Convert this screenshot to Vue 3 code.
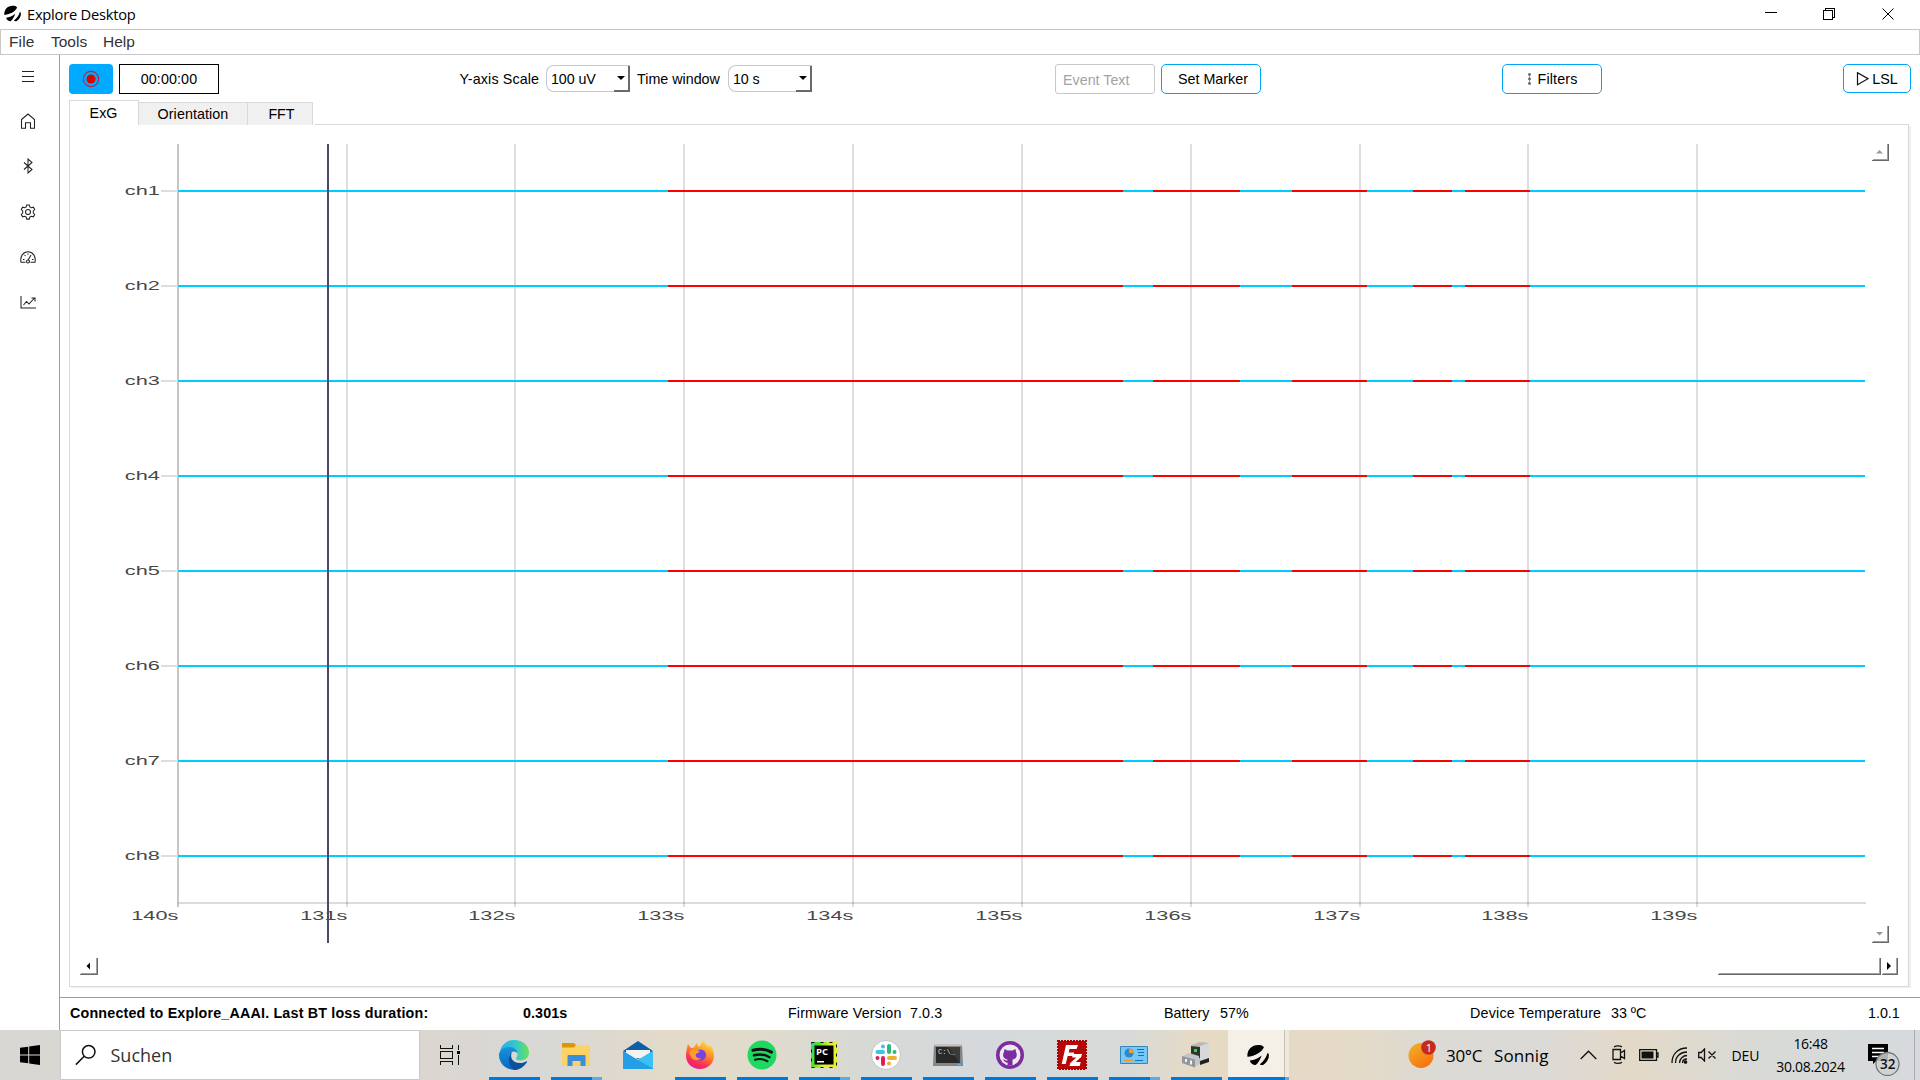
<script setup>
const channels = Array.from({ length: 8 }, (_, i) => ({ name: 'ch' + (i + 1), y: 66 + i * 95 }))
const ticks = [
  { x: 108, label: '140s' },
  { x: 277, label: '131s' },
  { x: 445, label: '132s' },
  { x: 614, label: '133s' },
  { x: 783, label: '134s' },
  { x: 952, label: '135s' },
  { x: 1121, label: '136s' },
  { x: 1290, label: '137s' },
  { x: 1458, label: '138s' },
  { x: 1627, label: '139s' },
]
const losses = [
  [598, 1053],
  [1083, 1170],
  [1222, 1297],
  [1343, 1382],
  [1395, 1460],
]
</script>

<template>
  <div class="screen">
    <header class="titlebar">
      <svg class="logo" width="17" height="17" viewBox="0 0 24 24">
        <path d="M.500 14C-.500 7 5 1 12 1c3 0 5.500.500 6.500 2.500C16 9 9 13 .500 14z" />
        <path d="M3 18c5-.500 9-2 13-5.500-1.500 4-3.500 8-6.500 10.500C6 23 4 21 3 18z" />
        <path d="M14 22c4-3 7-7 8.500-12.500 3 2 1 10-4.500 13-1 .6-3 .6-4-.5z" />
      </svg>
      <span class="app-name">Explore Desktop</span>
      <svg class="win" width="132" height="16" viewBox="0 0 132 16" shape-rendering="crispEdges">
        <path d="M0 6.500h12M58.500 4.500h9v9h-9zM60.500 4.500v-2h9v9h-2" />
        <path d="M117.500 2.500l11 11M128.500 2.500l-11 11" shape-rendering="auto" />
      </svg>
    </header>
    <nav class="menubar"><span class="m1">File</span><span class="m2">Tools</span><span class="m3">Help</span></nav>

    <div class="body">
      <aside class="side">
        <svg width="16" height="16" viewBox="0 0 16 16"><path d="M2 3.500h12M2 8.500h12M2 13.500h12" shape-rendering="crispEdges" /></svg>
        <svg width="16" height="16" viewBox="0 0 16 16"><path d="M1.500 6.500 8 1l6.500 5.500v8.700h-4V9.700h-5v5.500h-4z" /></svg>
        <svg width="16" height="16" viewBox="0 0 16 16"><path d="M4 4.500l8 7-4 3.500V1l4 3.500-8 7" /></svg>
        <svg width="16" height="16" viewBox="0 0 16 16"><circle cx="8" cy="8" r="2.500" /><path d="M6.700.900h2.600l.500 2 1.600.900 2-.600 1.300 2.300-1.400 1.500v2l1.400 1.500-1.300 2.300-2-.600-1.600.900-.500 2H6.700l-.500-2-1.600-.900-2 .600-1.300-2.300L2.700 9V7L1.300 5.500l1.300-2.300 2 .600 1.600-.900z" /></svg>
        <svg width="16" height="16" viewBox="0 0 16 16"><path d="M5.500 13.300H1C-.200 7 3.500 2.700 8 2.700s8.200 4.300 7 10.600h-4.500M8.200 11l2.800-5M3 10.500h1.500M4.500 6l1 1M8 4.500v1.200M12 10.500h1.500" /><circle cx="8" cy="12.500" r="1.500" /></svg>
        <svg width="16" height="16" viewBox="0 0 16 16"><path d="M1 2v12h15M3.500 11l3-3.500 2.500 2.500 5.500-6M11.500 4h3.500v3.500" /></svg>
      </aside>

      <main class="main">
        <div class="toolbar">
          <button class="rec">
            <svg width="18" height="18" viewBox="0 0 18 18"><circle cx="9" cy="9" r="7.600" fill="none" stroke="#c3202f" stroke-width="1.100" /><circle cx="9" cy="9" r="4.500" fill="#dc0000" /></svg>
          </button>
          <div class="timer">00:00:00</div>
          <label class="lab-y">Y-axis Scale</label>
          <div class="combo c1">100 uV<i></i></div>
          <label class="lab-t">Time window</label>
          <div class="combo c2">10 s<i></i></div>
          <div class="event">Event Text</div>
          <button class="btn marker">Set Marker</button>
          <button class="btn filters">
            <svg width="5" height="14" viewBox="0 0 5 14"><path d="M2.500 2v10" stroke="#aaa" /><g fill="#666"><circle cx="2.500" cy="2.500" r="1.400" /><circle cx="2.500" cy="7" r="1.400" /><circle cx="2.500" cy="11.500" r="1.400" /></g></svg>Filters
          </button>
          <button class="btn lsl">
            <svg width="13" height="14" viewBox="0 0 13 14"><path d="M1.500.700v12.100L12 6.700z" fill="none" stroke="#111" stroke-width="1.200" /></svg>LSL
          </button>
        </div>

        <div class="tabs">
          <div class="tab active">ExG</div>
          <div class="tab t2">Orientation</div>
          <div class="tab t3">FFT</div>
          <div class="rule"></div>
        </div>
        <section class="pane">
          <svg class="chart" width="1838" height="861" viewBox="0 0 1838 861">
            <g shape-rendering="crispEdges">
              <template v-for="(t, i) in ticks" :key="t.x">
                <rect :x="t.x - 1" y="19" width="2" height="763" :fill="i ? '#dedede' : '#c6c6c6'" />
              </template>
              <rect x="107" y="777" width="1689" height="2" fill="#dcdcdc" />
              <template v-for="t in ticks" :key="t.label">
                <rect :x="t.x - 1" y="777" width="2" height="2" fill="#bdbdbd" />
              </template>
              <template v-for="c in channels" :key="c.name">
                <rect x="91" :y="c.y - 1" width="17" height="2" fill="#dedede" />
                <rect x="108" :y="c.y - 1" width="1687" height="2" fill="#00ccff" />
                <rect v-for="l in losses" :key="l[0]" :x="l[0]" :y="c.y - 1" :width="l[1] - l[0]" height="2" fill="#ff0000" />
              </template>
            </g>
            <g class="axis">
              <text v-for="c in channels" :key="c.name" x="54.800" :y="c.y + 3.500" textLength="35" lengthAdjust="spacingAndGlyphs">{{ c.name }}</text>
              <text v-for="t in ticks" :key="t.label" :x="t.x - 46.700" :y="795.300" textLength="47" lengthAdjust="spacingAndGlyphs">{{ t.label }}</text>
            </g>
            <rect x="257" y="19" width="2" height="799" fill="#494963" />
            <g shape-rendering="crispEdges" fill="none">
              <g stroke="#a0a0a0">
                <path d="M1803 34.500h14.500V19M1803 816.500h14.500V801M11 848.500h15.500V833M1649 848.500h160.500V833M1813 848.500h13.500V833" />
              </g>
              <g stroke="#696969">
                <path d="M1802 35.500h16.500V19M1802 817.500h16.500V801M10 849.500h17.500V833M1648 849.500h162.500V833M1812 849.500h15.500V833" />
              </g>
            </g>
            <path d="M1806 28.500h7l-3.500-3.500zM1806 807h7l-3.500 3.500z" fill="#999" />
            <path d="M20 837.500v7l-3.500-3.500zM1817 837v8l4-4z" fill="#000" />
          </svg>
        </section>

        <footer class="status">
          <b class="s1">Connected to Explore_AAAI. Last BT loss duration:</b>
          <b class="s2">0.301s</b>
          <span class="s3">Firmware Version</span><span class="s4">7.0.3</span>
          <span class="s5">Battery</span><span class="s6">57%</span>
          <span class="s7">Device Temperature</span><span class="s8">33 ºC</span>
          <span class="s9">1.0.1</span>
        </footer>
      </main>
    </div>

    <div class="taskbar">
      <div class="start">
        <svg width="20" height="20" viewBox="0 0 20 20"><path d="M0 2.800 8.200 1.700v7.800H0zM9.200 1.500 20 0v9.500H9.200zM0 10.500h8.200v7.800L0 17.200zM9.200 10.500H20V20L9.200 18.500z" /></svg>
      </div>
      <div class="search">
        <svg width="22" height="22" viewBox="0 0 22 22"><circle cx="13.700" cy="7.800" r="6.300" fill="none" stroke="#111" stroke-width="1.500" /><path d="M9.200 12.300.900 20.600" stroke="#111" stroke-width="1.500" /></svg>
        <span>Suchen</span>
      </div>
      <div class="taskview">
        <svg width="20" height="20" viewBox="0 0 20 20" shape-rendering="crispEdges"><path d="M.500 0v3.500h12V0M.500 6.500h12v7H.500zM.500 20v-3.500h12V20M18.500 0v5M18.500 10v10" fill="none" stroke="#111" /><path d="M17 6h3v3h-3z" /></svg>
      </div>
      <div class="apps">
        <div class="app run">
          <svg width="30" height="30" viewBox="0 0 30 30">
            <defs>
              <linearGradient id="e1" x1="0" x2="1"><stop offset="0" stop-color="#2cabe8" /><stop offset=".5" stop-color="#30c5d2" /><stop offset="1" stop-color="#68e25a" /></linearGradient>
              <linearGradient id="e2" x1="0" y1="0" x2="0" y2="1"><stop offset="0" stop-color="#1492df" /><stop offset="1" stop-color="#0868bd" /></linearGradient>
            </defs>
            <path d="M1 11C3 4 9 0 15 0c9 0 15 6 15 12.500 0 5-4 8-8.500 8-3 0-4.500-1-4.500-2s1.500-1.500 1.500-4C18.500 11 15 8 11 8 7 8 3 9 1 11z" fill="url(#e1)" />
            <path d="M0 15C0 10 5 7 10.500 7c4.500 0 8 3 8 6.500-.500-1-2-2-3.500-2-3 0-5 3-5 6 0 6 4 10 9 12-9 2-19-4-19-14.500z" fill="url(#e2)" />
            <path d="M10 18c0-3 1-5 3-6-2 4-1 11 8 11 3 0 5-1 6.500-1.800.600-.200.800.300.500.800C25 27 20 30 15.500 30 12 28 9 23 10 18z" fill="#0d509e" />
          </svg>
        </div>
        <div class="app run multi">
          <svg width="28" height="24" viewBox="0 0 28 24"><path d="M0 2.500h28V23H0z" fill="#fdd264" /><path d="M0 0h12l2 2-2 2.500H0z" fill="#dd9706" /><path d="M5.500 13q0-1 1-1h16q1 0 1 1v10h-5v-5h-8v5h-5z" fill="#3a8edb" /></svg>
        </div>
        <div class="app">
          <svg width="30" height="28" viewBox="0 0 30 28"><path d="M0 10 15 0l15 10-15 8z" fill="#0b5fa9" /><path d="M3 9h24v8H3z" fill="#f3f3f3" /><path d="M0 10l15 9 15-9v18H0z" fill="#1d9be5" /><path d="M15 19 30 10v18z" fill="#39c1f3" /><path d="M11 17l19 11H0V10z" fill="#249fe6" /></svg>
        </div>
        <div class="app run">
          <svg width="30" height="30" viewBox="0 0 30 30">
            <defs><linearGradient id="f1" x1=".8" y1="0" x2=".3" y2="1"><stop offset="0" stop-color="#fff04a" /><stop offset=".4" stop-color="#ff9328" /><stop offset=".75" stop-color="#fb354f" /><stop offset="1" stop-color="#e9188e" /></linearGradient></defs>
            <path d="M3 4l3 4 3-.500 3-5 1.500 4.500C16 6 16 2 18.500 0c1 4 4 5 6 7 0 0 .5-.500.500-2 3 3 4 7 4 11 0 7-6 13-14 13S1 23 1 16c0-5 1-8 2-12z" fill="url(#f1)" /><circle cx="15.500" cy="15" r="5.500" fill="#7542e5" /><path d="M4 12c2-3 5-3 7-2l4 1c-1 2-3 2-4 3-1 3 2 5 5 4-2 3-8 3-10-1z" fill="#ff9a2c" />
          </svg>
        </div>
        <div class="app run">
          <svg width="30" height="30" viewBox="0 0 30 30"><circle cx="15" cy="15" r="14.500" fill="#1fd861" /><g fill="none" stroke="#111" stroke-linecap="round"><path d="M6 10.300c6-1.800 13-1.200 18.500 1.800" stroke-width="3" /><path d="M7 15.300c5.500-1.500 11-.800 15.500 1.900" stroke-width="2.500" /><path d="M8 19.800c4.500-1.200 9-.700 12.500 1.500" stroke-width="2" /></g></svg>
        </div>
        <div class="app run multi">
          <svg width="26" height="26" viewBox="0 0 26 26"><defs><linearGradient id="p1" x1="0" y1="0" x2="1" y2=".3"><stop offset="0" stop-color="#21d789" /><stop offset=".3" stop-color="#54e327" /><stop offset=".7" stop-color="#e8ed2f" /></linearGradient></defs><path d="M0 0h26v26H0z" fill="url(#p1)" /><path d="M.500.500h25v25H.500z" fill="none" stroke="#111" stroke-dasharray="3 6" /><path d="M3.500 3.500h19v19h-19z" /><text x="5" y="13" class="pc">PC</text><path d="M6 19h7v1.500H6z" fill="#fff" /></svg>
        </div>
        <div class="app run">
          <svg width="30" height="30" viewBox="0 0 30 30"><circle cx="15" cy="15" r="14.500" fill="#fff" stroke="#c4c4c4" /><g stroke-width="4" stroke-linecap="round"><path d="M12 6.500h.01M6.500 12H12" stroke="#36c5f0" /><path d="M18 6v6M23.500 12h.01" stroke="#2eb67d" /><path d="M18 18h6M18 23.500h.01" stroke="#ecb22e" /><path d="M6.500 18h.01M12 18v6" stroke="#e01e5a" /></g></svg>
        </div>
        <div class="app run">
          <svg width="30" height="24" viewBox="0 0 30 24"><path d="M1 1h28l1 22H0z" fill="#858585" /><path d="M1 1h28v2H1z" fill="#c2c2c2" /><path d="M3 4h24v16H3z" fill="#292929" /><path d="M15 4h12v16z" fill="#3b3b3b" /><text x="5" y="11" class="cmd">C:\_</text><path d="M25 21h3v1h-3z" fill="#58b9ff" /></svg>
        </div>
        <div class="app run">
          <svg width="30" height="30" viewBox="0 0 30 30"><circle cx="15" cy="15" r="14" fill="#7b2d9d" /><circle cx="15" cy="15" r="10.500" fill="#eee8f1" /><path d="M9.500 9l3 1.500h5l3-1.500.5 3c2 4 0 7-3.500 7.500v6h-5v-3c-3 .500-3-2-5-3 2-.500 3 1.500 5 1v-1c-4-.500-5.500-4-3.500-7.500z" fill="#7b2d9d" /></svg>
        </div>
        <div class="app run">
          <svg width="30" height="30" viewBox="0 0 30 30"><path d="M1 1h28v28H1z" fill="#b70707" stroke="#a00" stroke-width="2" stroke-dasharray="2 1" /><path d="M9 5h12l-1.500 4h-7l-.800 3.500h5.500l-1 3.500h-5.500l-2 8h-4zM16 14h9l-.800 3-5.500 5h5l-1 4H12.500l.800-3 6-5.500h-4.200z" fill="#fff" /></svg>
        </div>
        <div class="app run multi">
          <svg width="28" height="18" viewBox="0 0 28 18"><path d="M.500.500h27v17H.500z" fill="#75c9fa" stroke="#3685b5" /><circle cx="9" cy="7" r="4.500" fill="#2e89cb" /><path d="M9 7V2.500A4.500 4.500 0 0 1 13.500 7z" fill="#f59a1d" /><path d="M17 3.500h7M18 6.500h6M18 9.500h6" stroke="#1b72ad" /><path d="M4 14.500h9" stroke="#f59a1d" stroke-width="1.500" /><path d="M15 14.500h8" stroke="#1b72ad" /></svg>
        </div>
        <div class="app run">
          <svg width="28" height="26" viewBox="0 0 28 26"><path d="M9 3 18 0l9 1v17l-9 4-9-5z" fill="#b9b9b9" /><path d="M18 4l9-3v16l-9 4z" fill="#d8d8d8" /><path d="M18 19l9-3v4l-9 3z" fill="#222" /><path d="M9 4l9 1v11l-9-1z" fill="#30332f" /><path d="M12 7h3v3h-3z" fill="#1fdf3a" /><path d="M1 14l6-3 10 3v8l-4 3-12-4z" fill="#c3c5c9" /><path d="M0 14l13 3.500v8L0 21z" fill="#93969b" /><path d="M3 17h2v3H3zM8 18.500h2v4H8z" fill="#f2f2f2" /></svg>
        </div>
        <div class="app run multi current">
          <svg width="22" height="22" viewBox="0 0 24 24">
            <path d="M.500 14C-.500 7 5 1 12 1c3 0 5.500.500 6.500 2.500C16 9 9 13 .500 14z" />
            <path d="M3 18c5-.500 9-2 13-5.500-1.500 4-3.500 8-6.500 10.500C6 23 4 21 3 18z" />
            <path d="M14 22c4-3 7-7 8.500-12.500 3 2 1 10-4.500 13-1 .6-3 .6-4-.5z" />
          </svg>
        </div>
      </div>
      <div class="tray">
        <svg class="sun" width="30" height="30" viewBox="0 0 30 30"><defs><linearGradient id="s1" x1="0" y1="0" x2=".6" y2="1"><stop offset="0" stop-color="#f0b52c" /><stop offset="1" stop-color="#f8730e" /></linearGradient></defs><circle cx="13" cy="15.500" r="12.500" fill="url(#s1)" /><circle cx="20.500" cy="7.500" r="7.300" fill="#c42b1c" /><text x="17.800" y="12" class="one">1</text></svg>
        <span class="deg">30°C</span><span class="wx">Sonnig</span>
        <svg class="chev" width="17" height="10" viewBox="0 0 17 10"><path d="M.700 9 8.500 1.200 16.300 9" /></svg>
        <svg class="cam" width="16" height="20" viewBox="0 0 16 20"><path d="M2 4.500h7.500v10H2zM9.500 8l4-2.500v8l-4-2.500M3 2c2-1.500 6-1.500 8 0M3 17.300c2 1.500 6 1.500 8 0" /></svg>
        <svg class="bat" width="20" height="12" viewBox="0 0 20 12"><path d="M.700.700h16.800v10.600H.700zM17.500 4h1.500v4h-1.500" /><path d="M2.500 2.500h12v7h-12z" fill="#111" stroke="none" /></svg>
        <svg class="wifi" width="17" height="17" viewBox="0 0 17 17"><path d="M1 16C1 7 7 1 16 1M4.500 16C4.500 9.500 9.500 5 16 5M8.500 16c0-4 3.500-7.500 7.500-7.500M11.500 16c0-2.500 2-4 4.500-4" /><circle cx="14.500" cy="15" r="1.200" fill="#111" /></svg>
        <svg class="vol" width="19" height="14" viewBox="0 0 19 14"><path d="M.700 4.500h2.500l3.300-3.500v12l-3.300-3.500H.700zM10.500 3.500l7 7M17.500 3.500l-7 7" /></svg>
        <span class="deu">DEU</span>
        <div class="clock"><span class="tm">16:48</span><span class="dt">30.08.2024</span></div>
        <svg class="note" width="34" height="32" viewBox="0 0 34 32"><path d="M0 0h20v17H8l-3 3v-3H0z" fill="#000" stroke="none" /><path d="M4 4.500h12M4 8.500h12M4 12.500h8" stroke="#fff" /><circle cx="19.500" cy="20" r="11.500" fill="#cfd1d1" fill-opacity=".85" stroke="#777" /><text x="12" y="25.300" class="cnt">32</text></svg>
        <div class="peek"></div>
      </div>
    </div>
  </div>
</template>

<style>
body { margin: 0; overflow: hidden; }
</style>

<style scoped>
.screen { width: 1920px; height: 1080px; display: flex; flex-direction: column; background: #fff; font: 14.3px "Liberation Sans", Arial, sans-serif; color: #000; white-space: nowrap; overflow: hidden; }
.screen * { box-sizing: border-box; }
svg { display: block; flex: none; }
span, b, label { flex: none; }
.titlebar { height: 29px; display: flex; align-items: center; padding: 0 0 2px 4px; }
.logo { margin-right: 6px; }
.app-name { font: 14.7px "Open Sans", sans-serif; letter-spacing: -.24px; }
.win { margin: 0 23px 0 auto; fill: none; stroke: #000; }
.menubar { height: 26px; border: 1px solid #c8c8c8; display: flex; align-items: center; font-size: 15.500px; color: #333; padding-bottom: 1px; }
.m1 { width: 42px; margin-left: 8px; letter-spacing: .15px; }
.m2 { width: 52px; }
.body { flex: 1; min-height: 0; display: flex; }
.side { width: 60px; border-right: 1px solid #5fbdb5; padding: 13px 0 0 20px; display: flex; flex-direction: column; gap: 29.200px; }
.side svg { fill: none; stroke: #222; stroke-width: 1.050; }
.main { flex: 1; display: flex; flex-direction: column; }
.toolbar { height: 45px; padding: 9px 0 0 9px; display: flex; align-items: flex-start; line-height: 30px; }
button { font: inherit; line-height: inherit; padding: 0; color: #000; }
.rec { width: 44px; height: 30px; border: 0; border-radius: 4px; background: #00aaff; display: flex; align-items: center; justify-content: center; margin-right: 6px; }
.timer { width: 100px; height: 30px; border: 1px solid #000; text-align: center; line-height: 28px; letter-spacing: .1px; }
.lab-y { margin-left: 240.500px; width: 86.500px; letter-spacing: .13px; }
.lab-t { width: 91px; margin-left: 7px; }
.combo { width: 84px; height: 27px; margin-top: 1px; border: 1px solid #c8c8c8; border-radius: 8px 0 0 8px; border-right: 0; padding-left: 4px; line-height: 26px; display: flex; justify-content: space-between; letter-spacing: -.1px; }
.combo i { width: 16px; height: 26px; border: solid #696969; border-width: 0 2px 2px 0; position: relative; }
.combo i::after { content: ""; position: absolute; left: 3px; top: 10px; border: 4px solid transparent; border-top-color: #000; border-bottom: 0; }
.event { margin-left: 243px; width: 100px; height: 30px; border: 1px solid #c8c8c8; border-radius: 3px; color: #a3a3a3; padding-left: 7px; line-height: 31px; }
.btn { height: 30px; border: 1px solid #00a5f5; border-radius: 5px; background: #fff; line-height: 28px; display: flex; align-items: center; justify-content: center; }
.marker { width: 100px; margin-left: 6px; padding-left: 4px; }
.filters { width: 100px; margin-left: 241px; gap: 6px; letter-spacing: .15px; }
.lsl { width: 68px; height: 29px; margin-left: 241px; gap: 3px; }
.tabs { height: 25px; display: flex; align-items: flex-end; padding-left: 9px; line-height: 22px; }
.tab { height: 23px; border: 1px solid #d9d9d9; border-width: 1px 1px 0 0; background: #f0f0f0; text-align: center; }
.active { width: 70px; height: 25px; border-left-width: 1px; background: #fff; line-height: 24px; padding-right: 1px; }
.t2 { width: 109px; letter-spacing: .08px; }
.t3 { width: 65px; padding-left: 3px; }
.rule { flex: 1; height: 1px; margin: 0 11px 0 2px; background: #d9d9d9; }
.pane { width: 1840px; height: 862px; margin-left: 9px; border: 1px solid #d9d9d9; border-top: 0; box-shadow: 2px 1px #f0f0f0; }
.axis { font-size: 13px; fill: #484848; }
.status { height: 33px; margin-top: 10px; border-top: 1px solid #55bcb9; display: flex; align-items: center; padding: 0 0 2px 10px; }
.s1 { width: 453px; letter-spacing: .18px; }
.s2 { width: 265px; letter-spacing: .1px; }
.s3 { width: 122px; letter-spacing: .14px; }
.s4 { width: 254px; letter-spacing: .1px; }
.s5 { width: 56px; }
.s6 { width: 250px; }
.s7 { width: 141px; letter-spacing: .2px; }
.s8 { width: 257px; }
.taskbar { height: 50px; flex: none; display: flex; font-family: "Open Sans", sans-serif; background: linear-gradient(90deg, #d8d7d3 0, #dbd6d0 430px, #d8d8d6 540px, #e3dac9 670px, #e2dbcb 740px, #d8d9d4 860px, #d5d9dc 960px, #d8dad8 1130px, #e7dac4 1200px, #e4dac8 1360px, #dbdad5 1440px, #dbdad7 1540px, #e4d9c8 1630px, #d9dad6 1750px, #d6dade 1920px); }
.start { width: 60px; padding: 15px 0 0 20px; }
.search { width: 360px; border: 1px solid #c9c9c9; background: #fff; display: flex; align-items: center; padding-left: 14px; font-size: 18px; color: #333; }
.search svg { margin-right: 13.500px; }
.taskview { width: 63px; padding: 15px 0 0 20px; }
.apps { display: flex; }
.app { width: 62px; height: 50px; display: flex; align-items: center; justify-content: center; position: relative; }
.run::after { content: ""; position: absolute; left: 6px; bottom: 0; width: 51px; height: 3px; background: #0078d7; }
.multi::after { background: linear-gradient(90deg, #0078d7 41px, #62a9e4 41px); }
.current { background: linear-gradient(90deg, transparent 1px, #f4f0e8 1px 57px, #c6c0b3 57px 58px, #eee8dd 58px); }
.current::after { left: 1px; width: 61px; background: linear-gradient(90deg, #0078d7 57px, #62a9e4 57px); }
.pc { font: bold 9.500px "Open Sans", sans-serif; fill: #fff; }
.cmd { font: 7px "Liberation Mono", monospace; fill: #ddd; }
.tray { flex: 1; display: flex; align-items: center; padding-left: 119px; }
.tray svg { fill: none; stroke: #111; stroke-width: 1.300; }
.tray text { stroke: none; }
.tray .sun { stroke: none; }
.one { font-size: 11px; fill: #fff; }
.deg { width: 48px; margin-left: 8px; font-size: 17px; letter-spacing: -.3px; }
.wx { width: 86px; font-size: 17px; letter-spacing: .1px; }
.cam { margin-left: 14px; }
.bat { margin-left: 12px; }
.wifi { margin-left: 12px; }
.vol { margin-left: 10px; }
.deu { margin-left: 14.500px; width: 42px; font-size: 14px; letter-spacing: -.1px; }
.clock { width: 74px; display: flex; flex-direction: column; align-items: center; font-size: 14px; line-height: 23px; letter-spacing: -.3px; }
.note { margin: 9px 0 0 20.500px; }
.cnt { font: 600 13.500px "Open Sans", sans-serif; fill: #111; }
.peek { width: 1px; height: 50px; margin-left: auto; margin-right: 5px; background: #aaa; }
</style>
